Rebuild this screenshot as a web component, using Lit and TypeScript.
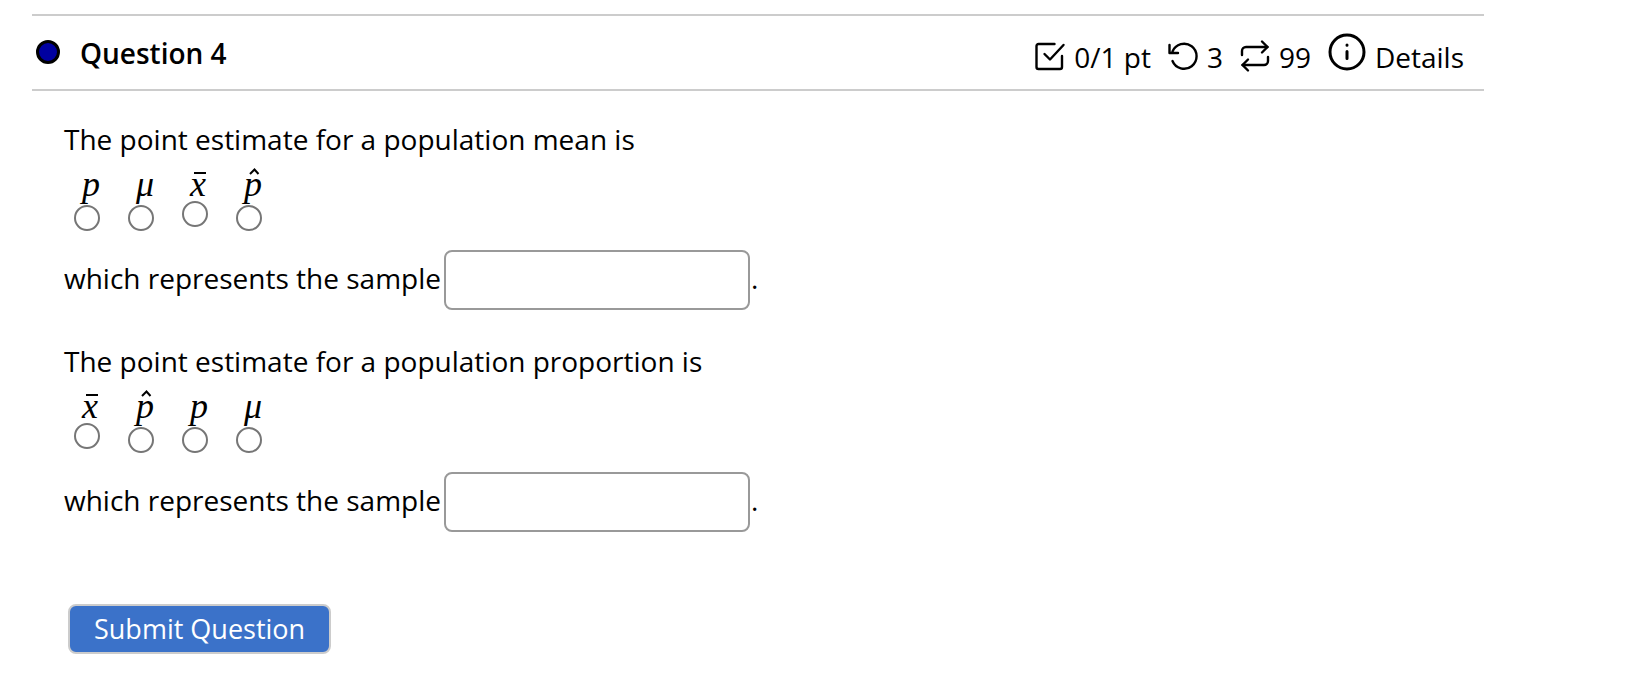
import { LitElement, html, css, svg, nothing } from "lit";
import { customElement, property } from "lit/decorators.js";

type Accent = "" | "bar" | "hat";
interface Choice {
  letter: string;
  accent: Accent;
  name: string;
}

const P: Choice = { letter: "p", accent: "", name: "p" };
const MU: Choice = { letter: "μ", accent: "", name: "mu" };
const XBAR: Choice = { letter: "x", accent: "bar", name: "x-bar" };
const PHAT: Choice = { letter: "p", accent: "hat", name: "p-hat" };

const icons = {
  attempt: svg`<path d="M19.500 3H3.500a2 2 0 0 0-2 2V26a2 2 0 0 0 2 2H25a2 2 0 0 0 2-2V15"/><path d="M9.500 13l5.500 5.500L28.500 4"/>`,
  undo: svg`<path d="M1.500 4v8h8.500"/><path d="M4.500 10.500A12.500 12.500 0 1 1 4.500 20"/>`,
  repeat: svg`<path d="M2 14v-4a4 4 0 0 1 4-4h21.500"/><path d="M22 .500L27.500 6l-5.500 5.500"/><path d="M28 16v4a4 4 0 0 1-4 4H2.500"/><path d="M8 18.500L2.500 24l5.500 5.500"/>`,
};

@customElement("question-choices")
export class QuestionChoices extends LitElement {
  static styles = css`
    :host {
      display: block;
    }
    .choices {
      display: flex;
      gap: 28px;
      margin: 0;
      padding: 6px 0 0 10px;
      border: 0;
    }
    .choice {
      display: flex;
      flex-direction: column;
      width: 26px;
    }
    .symbol {
      position: relative;
      width: 18px;
      height: 42px;
      margin-left: 8px;
      font: italic 36px/42px "Liberation Serif", serif;
    }
    .bar .symbol {
      height: 38px;
    }
    .accent {
      position: absolute;
      left: 2px;
      top: 5px;
      width: 14px;
      height: 9px;
      overflow: visible;
      fill: none;
      stroke: #000;
      stroke-width: 2;
    }
    .radio {
      appearance: none;
      box-sizing: border-box;
      width: 26px;
      height: 26px;
      margin: 0;
      border: 2px solid #767676;
      border-radius: 50%;
      background: #fff;
    }
    .radio:checked {
      background: #3b72c9;
      box-shadow: inset 0 0 0 4px #fff;
    }
  `;
  @property({ attribute: false }) choices: Choice[] = [];
  @property() group = "";

  private accent(kind: Accent) {
    if (!kind) return nothing;
    const d = kind === "bar" ? "M2 5h12" : "M4 6l4.500-4.500 4 4.500";
    return html`<svg class="accent" viewBox="0 0 14 9" aria-hidden="true"><path d=${d} /></svg>`;
  }

  render() {
    return html`<fieldset class="choices" aria-label="Point estimate">
      ${this.choices.map(
        (c) => html`<label class="choice ${c.accent}">
          <span class="symbol">${c.letter}${this.accent(c.accent)}</span>
          <input class="radio" type="radio" name=${this.group} value=${c.name} aria-label=${c.name} />
        </label>`
      )}
    </fieldset>`;
  }
}

@customElement("app-root")
export class AppRoot extends LitElement {
  static styles = css`
    :host {
      display: block;
      padding: 14px 142px 32px 32px;
      background: #fff;
      color: #000;
      font: 28px/36px "Open Sans", "Noto Sans", sans-serif;
    }
    .header {
      display: flex;
      align-items: center;
      justify-content: space-between;
      box-sizing: border-box;
      min-height: 77px;
      padding: 0 20px 0 4px;
      border: solid #ccc;
      border-width: 2px 0;
    }
    .heading {
      display: flex;
      align-items: center;
      gap: 20px;
    }
    .dot {
      box-sizing: border-box;
      width: 24px;
      height: 24px;
      margin-bottom: 2px;
      border: 3px solid #000;
      border-radius: 50%;
      background: #0000a0;
    }
    .title {
      margin: 0;
      font-size: 28px;
      font-weight: 600;
    }
    .meta {
      display: flex;
      align-items: center;
      gap: 17px;
      padding-top: 8px;
    }
    .item {
      display: flex;
      align-items: center;
      gap: 9px;
      color: inherit;
      text-decoration: none;
    }
    .icon {
      width: 30px;
      height: 30px;
      margin-bottom: 2px;
      overflow: visible;
      fill: none;
      stroke: #000;
      stroke-width: 2.4;
      stroke-linecap: round;
      stroke-linejoin: round;
    }
    .info {
      width: 38px;
      height: 38px;
      margin-bottom: 10px;
      fill: none;
      stroke: #000;
      stroke-width: 3;
      stroke-linecap: round;
    }
    .body {
      padding: 30px 0 0 32px;
    }
    .part {
      margin-bottom: 33px;
    }
    .prompt {
      margin: 0;
    }
    .answer {
      display: flex;
      align-items: center;
      padding-top: 19px;
    }
    .words {
      padding: 0 3px 4px 0;
    }
    .stop {
      padding: 0 0 4px 1px;
    }
    .field {
      box-sizing: border-box;
      width: 306px;
      height: 60px;
      padding: 8px 12px;
      border: 2px solid #999;
      border-radius: 8px;
      background: #fff;
      font: inherit;
    }
    .submit {
      margin: 39px 0 0 4px;
      padding: 5px 24px;
      border: 2px solid #ccc;
      border-radius: 8px;
      background: #3b72c9;
      color: #fff;
      font: inherit;
      font-size: 27px;
    }
  `;

  private part(id: string, prompt: string, choices: Choice[]) {
    return html`<section class="part">
      <p class="prompt">${prompt}</p>
      <question-choices .choices=${choices} group=${id}></question-choices>
      <div class="answer">
        <label class="words" for=${id}>which represents the sample</label>
        <input class="field" id=${id} type="text" autocomplete="off" />
        <span class="stop">.</span>
      </div>
    </section>`;
  }

  private stat(icon: unknown, text: string) {
    return html`<span class="item"><svg class="icon" viewBox="0 0 30 30" aria-hidden="true">${icon}</svg>${text}</span>`;
  }

  render() {
    return html`
      <header class="header">
        <div class="heading">
          <span class="dot"></span>
          <h2 class="title">Question 4</h2>
        </div>
        <div class="meta">
          ${this.stat(icons.attempt, "0/1 pt")} ${this.stat(icons.undo, "3")} ${this.stat(icons.repeat, "99")}
          <a class="item" href="#details">
            <svg class="info" viewBox="0 0 38 38" aria-hidden="true">
              <circle cx="19" cy="19" r="17" />
              <path d="M19 18.500v7M19 12v.200" />
            </svg>
            Details
          </a>
        </div>
      </header>
      <main class="body">
        ${this.part("mean", "The point estimate for a population mean is", [P, MU, XBAR, PHAT])}
        ${this.part("proportion", "The point estimate for a population proportion is", [XBAR, PHAT, P, MU])}
        <button class="submit" type="button">Submit Question</button>
      </main>
    `;
  }
}
